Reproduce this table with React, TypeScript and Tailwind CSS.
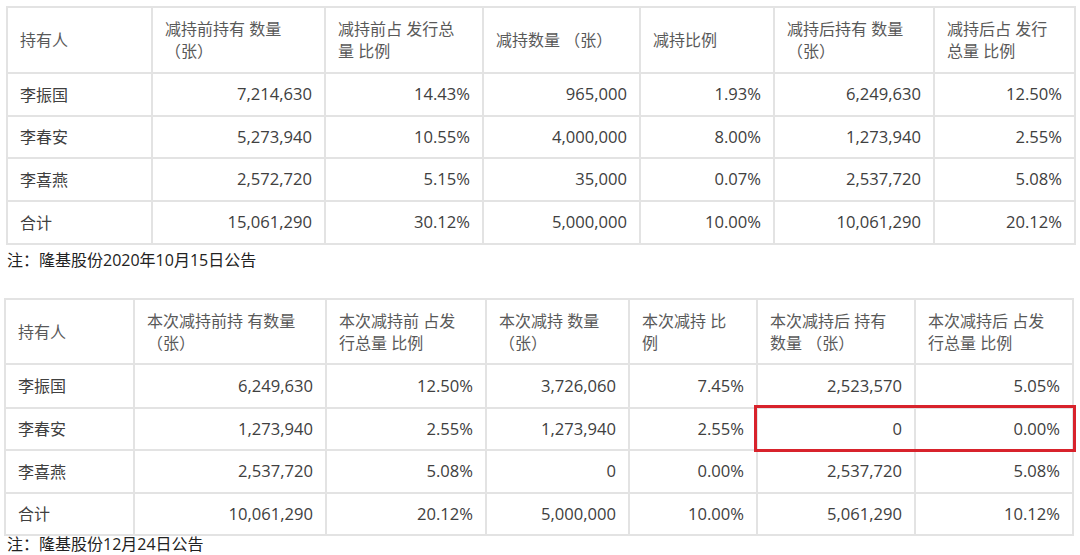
type Table = {
  cols: string[];
  headers: React.ReactNode[];
  rowClasses: string[];
  headClass: string;
  rows: string[][];
};

const t1: Table = {
  cols: ["w-[145px]", "w-[173px]", "w-[158px]", "w-[157px]", "w-[134px]", "w-[160px]", "w-[141px]"],
  headClass: "h-[66px]",
  rowClasses: ["h-[43px]", "h-[42px]", "h-[43px]", "h-[43px]"],
  headers: [
    "持有人",
    <>减持前持有 数量<br />（张）</>,
    <>减持前占 发行总<br />量 比例</>,
    "减持数量 （张）",
    "减持比例",
    <>减持后持有 数量<br />（张）</>,
    <>减持后占 发行<br />总量 比例</>,
  ],
  rows: [
    ["李振国", "7,214,630", "14.43%", "965,000", "1.93%", "6,249,630", "12.50%"],
    ["李春安", "5,273,940", "10.55%", "4,000,000", "8.00%", "1,273,940", "2.55%"],
    ["李喜燕", "2,572,720", "5.15%", "35,000", "0.07%", "2,537,720", "5.08%"],
    ["合计", "15,061,290", "30.12%", "5,000,000", "10.00%", "10,061,290", "20.12%"],
  ],
};

const t2: Table = {
  cols: ["w-[129px]", "w-[192px]", "w-[160px]", "w-[143px]", "w-[128px]", "w-[158px]", "w-[158px]"],
  headClass: "h-[65px]",
  rowClasses: ["h-[44px]", "h-[42px]", "h-[43px]", "h-[42px]"],
  headers: [
    "持有人",
    <>本次减持前持 有数量<br />（张）</>,
    <>本次减持前 占发<br />行总量 比例</>,
    <>本次减持 数量<br />（张）</>,
    <>本次减持 比<br />例</>,
    <>本次减持后 持有<br />数量 （张）</>,
    <>本次减持后 占发<br />行总量 比例</>,
  ],
  rows: [
    ["李振国", "6,249,630", "12.50%", "3,726,060", "7.45%", "2,523,570", "5.05%"],
    ["李春安", "1,273,940", "2.55%", "1,273,940", "2.55%", "0", "0.00%"],
    ["李喜燕", "2,537,720", "5.08%", "0", "0.00%", "2,537,720", "5.08%"],
    ["合计", "10,061,290", "20.12%", "5,000,000", "10.00%", "5,061,290", "10.12%"],
  ],
};

function DataTable({ t }: { t: Table }) {
  return (
    <table className="table-fixed border-collapse text-[16px]">
      <colgroup>
        {t.cols.map((w, i) => (
          <col key={i} className={w} />
        ))}
      </colgroup>
      <thead>
        <tr className={t.headClass}>
          {t.headers.map((h, i) => (
            <th
              key={i}
              className="border-2 border-[#e3e3e3] px-[12px] text-left align-middle font-normal leading-[22px] text-[#595959]"
            >
              {h}
            </th>
          ))}
        </tr>
      </thead>
      <tbody>
        {t.rows.map((r, ri) => (
          <tr key={ri} className={t.rowClasses[ri]}>
            {r.map((c, ci) => (
              <td
                key={ci}
                className={
                  ci === 0
                    ? "border-2 border-[#e3e3e3] px-[12px] text-left align-middle text-[#404040]"
                    : "border-2 border-[#e3e3e3] px-[12px] text-right align-middle text-[16.6px] text-[#404040]"
                }
              >
                {c}
              </td>
            ))}
          </tr>
        ))}
      </tbody>
    </table>
  );
}

export default function App() {
  return (
    <div className="h-[555px] w-[1080px] overflow-hidden bg-white font-['Open_Sans','Noto_Sans_CJK_SC',sans-serif]">
      <div className="pl-[6px] pt-[6px]">
        <DataTable t={t1} />
      </div>
      <p className="mt-[4px] pl-[7px] text-[16px] leading-[22px] text-[#222]">
        注：隆基股份2020年10月15日公告
      </p>
      <div className="relative mt-[27px] pl-[4px]">
        <DataTable t={t2} />
        <div className="absolute left-[754px] top-[107px] h-[47px] w-[322px] border-[3px] border-[#d8232c]" />
      </div>
      <p className="-mt-[3px] pl-[7px] text-[16px] leading-[22px] text-[#222]">
        注：隆基股份12月24日公告
      </p>
    </div>
  );
}
